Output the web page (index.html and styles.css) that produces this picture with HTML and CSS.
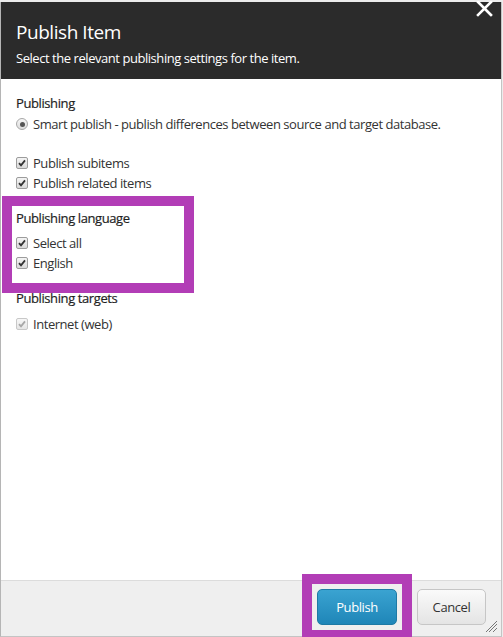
FILE: index.html
```html
<!DOCTYPE html>
<html lang="en">
<head>
<meta charset="utf-8">
<title>Publish Item</title>
<link rel="stylesheet" href="styles.css">
</head>
<body>
<div class="dialog">
  <header class="dlg-header">
    <h1 class="dlg-title">Publish Item</h1>
    <p class="dlg-subtitle">Select the relevant publishing settings for the item.</p>
    <button class="dlg-close" aria-label="Close">
      <svg width="17" height="16" viewBox="0 0 17 16"><path d="M2 1 L15 14 M15 1 L2 14" stroke="#fff" stroke-width="2.6" stroke-linecap="square"/></svg>
    </button>
  </header>

  <main class="dlg-body">
    <section class="group">
      <div class="group-title">Publishing</div>
      <label class="row row-radio"><span class="radio"><span class="dot"></span></span>Smart publish - publish differences between source and target database.</label>
    </section>

    <section class="group group-options">
      <label class="row"><span class="cb"><svg viewBox="0 0 11 11"><path d="M2.2 5.6 L4.4 8 L8.8 2.6" fill="none" stroke="#333" stroke-width="2"/></svg></span>Publish subitems</label>
      <label class="row"><span class="cb"><svg viewBox="0 0 11 11"><path d="M2.2 5.6 L4.4 8 L8.8 2.6" fill="none" stroke="#333" stroke-width="2"/></svg></span>Publish related items</label>
    </section>

    <section class="group group-lang">
      <div class="group-title">Publishing language</div>
      <label class="row first"><span class="cb"><svg viewBox="0 0 11 11"><path d="M2.2 5.6 L4.4 8 L8.8 2.6" fill="none" stroke="#333" stroke-width="2"/></svg></span>Select all</label>
      <label class="row"><span class="cb"><svg viewBox="0 0 11 11"><path d="M2.2 5.6 L4.4 8 L8.8 2.6" fill="none" stroke="#333" stroke-width="2"/></svg></span>English</label>
    </section>

    <section class="group group-targets">
      <div class="group-title">Publishing targets</div>
      <label class="row first"><span class="cb cb-disabled"><svg viewBox="0 0 11 11"><path d="M2.2 5.6 L4.4 8 L8.8 2.6" fill="none" stroke="#a8a8a8" stroke-width="2"/></svg></span>Internet (web)</label>
    </section>
  </main>

  <footer class="dlg-footer">
    <button class="btn btn-primary">Publish</button>
    <button class="btn btn-default">Cancel</button>
    <span class="grip">
      <svg width="12" height="12" viewBox="0 0 12 12"><path d="M11 3 L3 11 M11 7 L7 11 M11 0 L0 11" stroke="#777" stroke-width="1"/></svg>
    </span>
  </footer>

  <div class="highlight highlight-lang"></div>
  <div class="highlight highlight-publish"></div>
</div>
</body>
</html>
```

FILE: styles.css
```css
* { box-sizing: border-box; }

html, body {
  margin: 0;
  padding: 0;
  height: 100%;
}

body {
  background: #ececec;
  font-family: "Open Sans", "DejaVu Sans", sans-serif;
  font-size: 13px;
  color: #333;
  overflow: hidden;
}

.dialog {
  position: relative;
  margin-top: 2px;
  width: 502px;
  height: 635px;
  display: flex;
  flex-direction: column;
  background: #fff;
  border-left: 1px solid #b5b5b5;
  border-right: 1px solid #c4c4c4;
  border-bottom: 1px solid #c4c4c4;
}

.dlg-header {
  position: relative;
  height: 77px;
  background: #2b2b2b;
  color: #fff;
  padding: 18px 0 0 15px;
  flex: none;
}

.dlg-title {
  margin: 0;
  font-weight: 400;
  font-size: 19px;
  line-height: 24px;
  letter-spacing: -0.45px;
}

.dlg-subtitle {
  margin: 5px 0 0;
  font-size: 13px;
  line-height: 18px;
  letter-spacing: -0.45px;
}

.dlg-close {
  position: absolute;
  top: -1px;
  right: 8px;
  width: 17px;
  height: 16px;
  padding: 0;
  border: 0;
  background: none;
  display: block;
}
.dlg-close svg { display: block; }

.dlg-body {
  flex: 1;
  padding: 14px 15px 0 15px;
}

.group-title {
  line-height: 20px;
  color: #1f1f1f;
  font-weight: 500;
  letter-spacing: -0.4px;
  -webkit-text-stroke: 0.2px #1f1f1f;
}

.row {
  display: flex;
  align-items: center;
  gap: 5px;
  line-height: 20px;
  letter-spacing: -0.45px;
}

.row-radio { margin-top: 1px; }

.group-options { margin-top: 19px; }

.group-lang { margin-top: 15px; }
.group-targets { margin-top: 15px; }

.group-lang .row.first { margin-top: 5px; }
.group-targets .row.first { margin-top: 6px; }

.cb {
  width: 12px;
  height: 12px;
  flex: none;
  border: 1px solid #9c9c9c;
  border-radius: 2px;
  background: linear-gradient(#f4f4f4, #d9d9d9);
  display: flex;
  align-items: center;
  justify-content: center;
}
.cb svg { width: 10px; height: 10px; display: block; }

.cb-disabled {
  border-color: #c8c8c8;
  background: linear-gradient(#f7f7f7, #e6e6e6);
}

.radio {
  width: 12px;
  height: 12px;
  flex: none;
  border: 1px solid #a8a8a8;
  border-radius: 50%;
  background: linear-gradient(#f6f6f6, #dcdcdc);
  display: flex;
  align-items: center;
  justify-content: center;
}
.radio .dot {
  width: 5px;
  height: 5px;
  border-radius: 50%;
  background: #555;
}

.dlg-footer {
  position: relative;
  flex: none;
  height: 56px;
  background: #efefef;
  border-top: 1px solid #dcdcdc;
  display: flex;
  justify-content: flex-end;
  align-items: flex-start;
  gap: 20px;
  padding: 8px 15px 0 0;
}

.btn {
  height: 36px;
  border-radius: 5px;
  font-family: "Open Sans", "DejaVu Sans", sans-serif;
  font-size: 13px;
  padding: 0;
  letter-spacing: -0.4px;
}

.btn-primary {
  width: 80px;
  color: #fff;
  border: 1px solid #1e7aa5;
  background: linear-gradient(#3aa3d1, #1f86b8);
}

.btn-default {
  width: 69px;
  color: #333;
  border: 1px solid #c6c6c6;
  background: linear-gradient(#fafafa, #e4e4e4);
}

.grip {
  position: absolute;
  right: 3px;
  bottom: 3px;
  width: 12px;
  height: 12px;
}
.grip svg { display: block; }

.highlight {
  position: absolute;
  border: 10px solid #b23db6;
  pointer-events: none;
}

.highlight-lang {
  left: 1px;
  top: 194px;
  width: 192px;
  height: 97px;
}

.highlight-publish {
  left: 301px;
  top: 572px;
  width: 110px;
  height: 66px;
}
```
